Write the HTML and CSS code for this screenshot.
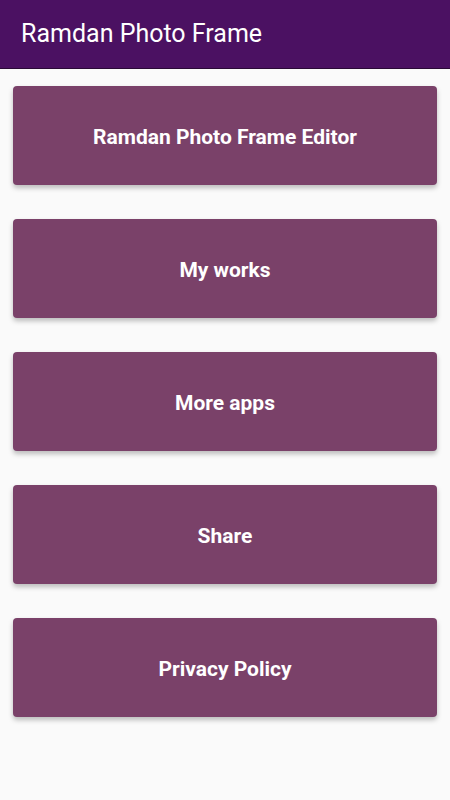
FILE: index.html
```html
<!DOCTYPE html>
<html lang="en">
<head>
  <meta charset="UTF-8">
  <title>Ramdan Photo Frame</title>
  <link rel="stylesheet" href="styles.css">
</head>
<body>

<header class="toolbar">Ramdan Photo Frame</header>

<main class="menu">
  <button class="menu-btn">Ramdan Photo Frame Editor</button>
  <button class="menu-btn">My works</button>
  <button class="menu-btn">More apps</button>
  <button class="menu-btn">Share</button>
  <button class="menu-btn">Privacy Policy</button>
</main>

</body>
</html>
```

FILE: styles.css
```css
body {
  margin: 0;
  background: #fafafa;
  font-family: Roboto, "Liberation Sans", sans-serif;
  height: 800px;
}
.toolbar {
  height: 69px;
  box-sizing: border-box;
  padding: 0 21px 1px;
  display: flex;
  align-items: center;
  background: #4b1162;
  color: #fff;
  font-size: 25px;
  border-bottom: 1px solid #2a0a36;
}
.menu {
  display: flex;
  flex-direction: column;
  gap: 34px;
  padding: 17px 13px 0;
}
.menu-btn {
  height: 99px;
  border: none;
  border-radius: 4px;
  background: #7a4169;
  color: #fff;
  font-family: Roboto, "Liberation Sans", sans-serif;
  font-weight: bold;
  font-size: 21px;
  box-shadow: 0 3px 5px rgba(0, 0, 0, 0.25);
  padding-top: 4px;
}
```
